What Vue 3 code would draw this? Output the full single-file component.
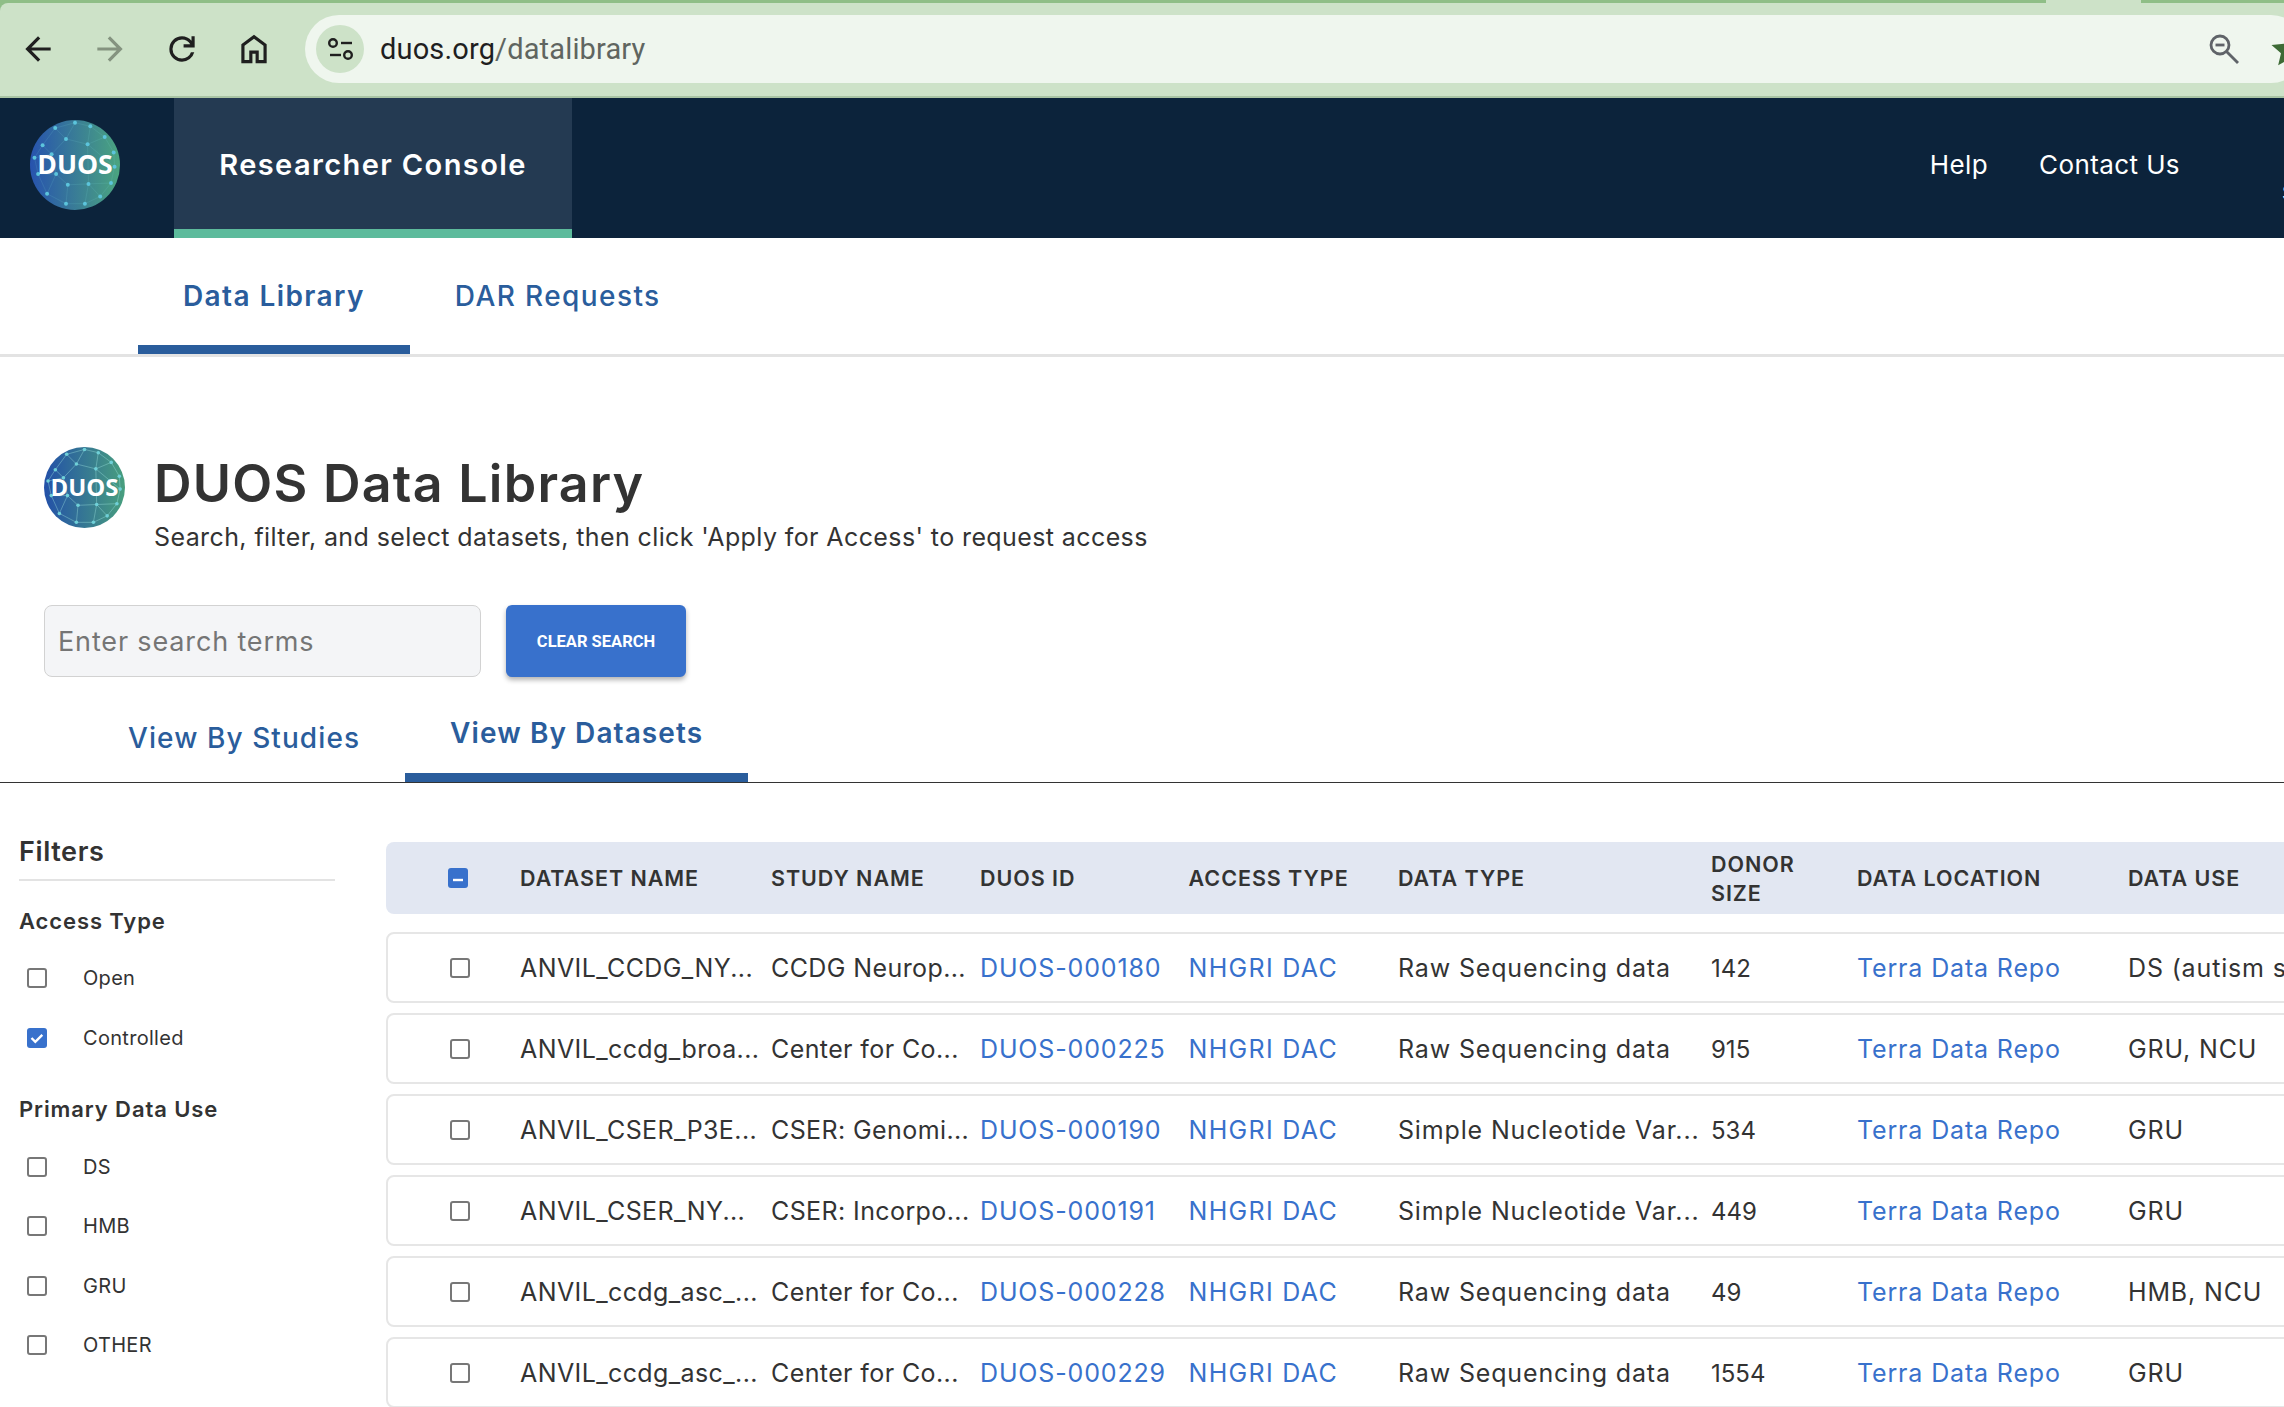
<template>
  <div class="page">
    <!-- browser chrome -->
    <div class="chrome">
      <span class="notch"></span>
      <div class="bar">
        <div class="toolbar">
          <svg class="tool" viewBox="0 0 24 24"><path d="m7.825 13 5.6 5.6L12 20l-8-8 8-8 1.425 1.4-5.6 5.6H20v2z" /></svg>
          <svg class="tool dim" viewBox="0 0 24 24"><path d="M16.175 13H4v-2h12.175l-5.6-5.6L12 4l8 8-8 8-1.425-1.4z" /></svg>
          <svg class="tool" viewBox="0 0 24 24"><path d="M12 20q-3.35 0-5.675-2.325T4 12t2.325-5.675T12 4q1.725 0 3.3.713T18 6.75V4h2v7h-7V9h4.2q-.8-1.4-2.187-2.2T12 6Q9.5 6 7.75 7.75T6 12t1.75 4.25T12 18q1.925 0 3.475-1.1T17.65 14h2.1q-.7 2.65-2.85 4.325T12 20" /></svg>
          <svg class="tool" viewBox="0 0 24 24"><path d="M6 19h3v-6h6v6h3v-9l-6-4.5L6 10zm-2 2V9l8-6 8 6v12h-7v-6h-2v6z" /></svg>
          <div class="omnibox">
            <span class="site-info">
              <svg width="48" height="48" viewBox="0 0 48 48" fill="none" stroke="#1f1f1f" stroke-width="2.4">
                <circle cx="17" cy="18" r="3.8" />
                <path d="M25 18h11" />
                <path d="M14 30h11" />
                <circle cx="32" cy="30" r="3.8" />
              </svg>
            </span>
            <span class="url">duos.org<span class="url-path">/datalibrary</span></span>
            <svg class="zoom-out" width="32" height="32" viewBox="0 0 32 32" fill="none" stroke="#5f6368" stroke-width="2.8">
              <circle cx="12" cy="12" r="9" />
              <path d="M7.5 12h9" />
              <path d="M18.500 18.500 30 30" />
            </svg>
            <svg class="star" width="40" height="40" viewBox="0 0 24 24"><path fill="#3d6a35" d="m12 2 3 6.9 7.5.7-5.7 4.9 1.7 7.3L12 18l-6.500 3.800 1.700-7.300L1.500 9.600 9 8.900z" /></svg>
          </div>
        </div>
      </div>
    </div>

    <!-- app nav -->
    <header class="nav">
      <svg class="nav-logo" viewBox="0 0 100 100">
        <defs>
          <linearGradient id="navGrad" x1="0" y1="0" x2="1" y2="0">
            <stop offset="0" stop-color="#2753ae" />
            <stop offset="1" stop-color="#4ba57f" />
          </linearGradient>
        </defs>
        <circle cx="50" cy="50" r="50" fill="url(#navGrad)" />
        <line v-for="(l, i) in logoLines" :key="i" :x1="logoNodes[l[0]][0]" :y1="logoNodes[l[0]][1]" :x2="logoNodes[l[1]][0]" :y2="logoNodes[l[1]][1]" stroke="#7fd8d8" stroke-opacity="0.22" stroke-width="0.7" />
        <circle v-for="(n, i) in logoNodes" :key="i" :cx="n[0]" :cy="n[1]" r="2.200" fill="#5cc4dc" />
        <text x="50" y="60.500" text-anchor="middle" class="logo-text">DUOS</text>
      </svg>
      <div class="console-tab">Researcher Console</div>
      <nav class="nav-links">
        <a>Help</a>
        <a>Contact Us</a>
      </nav>
      <span class="nav-clip">S</span>
    </header>

    <div class="subtabs">
      <a class="subtab is-active">Data Library</a>
      <a class="subtab">DAR Requests</a>
    </div>

    <section class="lib-head">
      <svg class="lib-logo" viewBox="0 0 100 100">
        <defs>
          <linearGradient id="libGrad" x1="0" y1="0" x2="1" y2="0">
            <stop offset="0" stop-color="#2350a8" />
            <stop offset="1" stop-color="#489f7e" />
          </linearGradient>
        </defs>
        <circle cx="50" cy="50" r="50" fill="url(#libGrad)" />
        <line v-for="(l, i) in logoLines" :key="i" :x1="logoNodes[l[0]][0]" :y1="logoNodes[l[0]][1]" :x2="logoNodes[l[1]][0]" :y2="logoNodes[l[1]][1]" stroke="#9fe6e0" stroke-opacity="0.6" stroke-width="0.8" />
        <circle v-for="(n, i) in logoNodes" :key="i" :cx="n[0]" :cy="n[1]" r="2.200" fill="#6fd0d8" />
        <text x="50" y="61" text-anchor="middle" class="logo-text">DUOS</text>
      </svg>
      <div>
        <h1>DUOS Data Library</h1>
        <p>Search, filter, and select datasets, then click 'Apply for Access' to request access</p>
      </div>
    </section>

    <div class="search-row">
      <input class="search" placeholder="Enter search terms" />
      <button class="clear-btn">CLEAR SEARCH</button>
    </div>

    <div class="view-tabs">
      <a class="view-tab">View By Studies</a>
      <a class="view-tab is-active">View By Datasets</a>
    </div>

    <div class="body">
      <aside class="filters">
        <div class="filters-title">Filters</div>
        <div v-for="g in filterGroups" :key="g.title" class="filter-group">
          <div class="group-title">{{ g.title }}</div>
          <label v-for="o in g.options" :key="o.label" class="filter-opt">
            <span class="check" :class="{ 'is-on': o.on }">
              <svg v-if="o.on" width="20" height="20" viewBox="0 0 20 20" fill="none" stroke="#fff" stroke-width="2.400"><path d="m4.500 10 3.800 3.800 7-7" /></svg>
            </span>
            {{ o.label }}
          </label>
        </div>
      </aside>

      <div class="table">
        <div class="thead">
          <span class="cell-check"><span class="check is-on">
            <svg width="20" height="20" viewBox="0 0 20 20" fill="none" stroke="#fff" stroke-width="2.400"><path d="M5 10h10" /></svg>
          </span></span>
          <span v-for="h in headers" :key="h">{{ h }}</span>
        </div>
        <div v-for="r in rows" :key="r.id" class="trow">
          <span class="cell-check"><span class="check"></span></span>
          <span class="tight">{{ r.name }}</span>
          <span class="tight">{{ r.study }}</span>
          <a>{{ r.id }}</a>
          <a class="wide">NHGRI DAC</a>
          <span>{{ r.type }}</span>
          <span class="donors">{{ r.donors }}</span>
          <a>Terra Data Repo</a>
          <span>{{ r.use }}</span>
        </div>
      </div>
    </div>
  </div>
</template>

<script setup>
const logoNodes = [
  [50, 3], [28, 9], [67, 7], [83, 19], [40, 21], [64, 27], [93, 36], [14, 28], [24, 38], [5, 42],
  [94, 52], [29, 60], [9, 60], [42, 72], [65, 71], [90, 70], [19, 82], [40, 93], [61, 93], [78, 85]
];

const logoLines = [
  [0, 1], [0, 2], [2, 3], [1, 4], [0, 4], [4, 5], [2, 5], [5, 3], [3, 6], [1, 7], [7, 8], [4, 8], [8, 9], [7, 9],
  [6, 10], [5, 10], [8, 11], [9, 12], [11, 12], [11, 13], [13, 14], [14, 15], [10, 15], [12, 16], [11, 16],
  [16, 17], [13, 17], [17, 18], [14, 18], [18, 19], [14, 19], [15, 19], [5, 14]
];

const filterGroups = [
  {
    title: 'Access Type',
    options: [
      { label: 'Open', on: false },
      { label: 'Controlled', on: true }
    ]
  },
  {
    title: 'Primary Data Use',
    options: [
      { label: 'DS', on: false },
      { label: 'HMB', on: false },
      { label: 'GRU', on: false },
      { label: 'OTHER', on: false }
    ]
  }
];

const headers = ['DATASET NAME', 'STUDY NAME', 'DUOS ID', 'ACCESS TYPE', 'DATA TYPE', 'DONOR SIZE', 'DATA LOCATION', 'DATA USE'];

const rows = [
  { name: 'ANVIL_CCDG_NY...', study: 'CCDG Neurop...', id: 'DUOS-000180', type: 'Raw Sequencing data', donors: 142, use: 'DS (autism spectrum disorder)' },
  { name: 'ANVIL_ccdg_broa...', study: 'Center for Co...', id: 'DUOS-000225', type: 'Raw Sequencing data', donors: 915, use: 'GRU, NCU' },
  { name: 'ANVIL_CSER_P3E...', study: 'CSER: Genomi...', id: 'DUOS-000190', type: 'Simple Nucleotide Var...', donors: 534, use: 'GRU' },
  { name: 'ANVIL_CSER_NY...', study: 'CSER: Incorpo...', id: 'DUOS-000191', type: 'Simple Nucleotide Var...', donors: 449, use: 'GRU' },
  { name: 'ANVIL_ccdg_asc_...', study: 'Center for Co...', id: 'DUOS-000228', type: 'Raw Sequencing data', donors: 49, use: 'HMB, NCU' },
  { name: 'ANVIL_ccdg_asc_...', study: 'Center for Co...', id: 'DUOS-000229', type: 'Raw Sequencing data', donors: 1554, use: 'GRU' }
];
</script>

<style scoped>
.page {
  width: 100%;
  height: 100vh;
  overflow: hidden;
  background: #fff;
  color: #333;
  font-family: Inter, "Noto Sans", sans-serif;
}

/* browser chrome */
.chrome {
  position: relative;
  height: 98px;
  padding-top: 3px;
  box-sizing: border-box;
  background: #8fbe87;
  border-bottom: 2px solid #a9c4a4;
}

.notch {
  position: absolute;
  top: 0;
  left: 2046px;
  width: 95px;
  height: 3px;
  background: #cde2c8;
}

.bar {
  height: 100%;
  background: #cde2c8;
  border-top-left-radius: 8px;
}

.toolbar {
  display: flex;
  align-items: center;
  height: 68px;
  padding: 12px 0 0 19px;
  box-sizing: content-box;
}

.tool {
  width: 38px;
  height: 38px;
  margin-right: 34px;
  flex: none;
  fill: #1f1f1f;
}

.tool.dim {
  fill: #84937f;
}

.tool:nth-child(4) {
  margin-right: 32px;
}

.omnibox {
  display: flex;
  align-items: center;
  flex: none;
  width: 2000px;
  height: 68px;
  padding-left: 11px;
  box-sizing: border-box;
  background: #eff6ee;
  border-radius: 34px;
}

.site-info {
  width: 48px;
  height: 48px;
  border-radius: 50%;
  background: #cde2c8;
  flex: none;
}

.url {
  margin-left: 16px;
  font-family: Roboto, sans-serif;
  font-size: 29px;
  letter-spacing: 0.15px;
  color: #1f1f1f;
}

.url-path {
  color: #5f6560;
}

.zoom-out {
  margin-left: auto;
  margin-right: 29px;
}

.star {
  margin-right: -4px;
}

/* nav */
.nav {
  display: flex;
  align-items: center;
  height: 140px;
  padding-bottom: 6px;
  box-sizing: border-box;
  background: #0c233b;
  color: #fff;
}

.nav-logo {
  width: 90px;
  height: 90px;
  margin-left: 30px;
  flex: none;
}

.logo-text {
  font-family: "Open Sans", sans-serif;
  font-size: 29.500px;
  font-weight: 700;
  fill: #fff;
}

.console-tab {
  align-self: stretch;
  width: 398px;
  margin: 0 0 -6px 54px;
  padding-top: 1px;
  box-sizing: border-box;
  border-bottom: 9px solid #5dbb9c;
  background: #243a52;
  display: flex;
  align-items: center;
  justify-content: center;
  font-size: 29px;
  font-weight: 600;
  letter-spacing: 1.4px;
}

.nav-links {
  margin-left: auto;
  margin-bottom: 2px;
  display: flex;
  gap: 51px;
  font-size: 26px;
  letter-spacing: 0.4px;
}

.nav-clip {
  margin-left: 102px;
  margin-top: 56px;
  font-size: 20px;
  flex: none;
  width: 2px;
  overflow: hidden;
}

/* top tabs */
.subtabs {
  display: flex;
  height: 119px;
  padding-left: 138px;
  box-sizing: border-box;
  border-bottom: 3px solid #e3e3e3;
}

.subtab {
  display: flex;
  align-items: center;
  padding: 8px 45px 0;
  font-size: 28px;
  font-weight: 500;
  letter-spacing: 1.4px;
  color: #2a5d9c;
  border-bottom: 9px solid transparent;
}

.subtab.is-active {
  font-weight: 600;
  border-bottom-color: #2a5d9c;
}

/* page head */
.lib-head {
  display: flex;
  gap: 29px;
  margin-top: 90px;
  padding-left: 44px;
}

.lib-logo {
  width: 81px;
  height: 81px;
  flex: none;
}

h1 {
  margin: 7px 0 0;
  font-size: 52px;
  line-height: 60px;
  font-weight: 600;
  letter-spacing: 1.25px;
}

.lib-head p {
  margin: 5px 0 0;
  font-size: 25px;
  line-height: 36px;
  letter-spacing: 0.4px;
}

/* search */
.search-row {
  display: flex;
  gap: 25px;
  margin-top: 50px;
  padding-left: 44px;
}

.search {
  width: 437px;
  height: 72px;
  box-sizing: border-box;
  padding: 0 13px;
  border: 1.500px solid #d2d2d2;
  border-radius: 8px;
  background: #f4f5f7;
  font-family: inherit;
  font-size: 27px;
  letter-spacing: 0.85px;
}

.search::placeholder {
  color: #757575;
  opacity: 1;
}

.clear-btn {
  width: 180px;
  height: 72px;
  border: 0;
  border-radius: 6px;
  background: #3871cc;
  color: #fff;
  font-family: Roboto, sans-serif;
  font-size: 16.500px;
  font-weight: 700;
  box-shadow: 0 3px 5px rgba(0, 0, 0, 0.3);
}

/* view tabs */
.view-tabs {
  display: flex;
  align-items: flex-end;
  height: 106px;
  padding-left: 83px;
  box-sizing: border-box;
  border-bottom: 1.500px solid #333;
}

.view-tab {
  padding: 0 45px 22px;
  font-size: 28px;
  font-weight: 500;
  letter-spacing: 1.08px;
  line-height: 44px;
  color: #2a5d9c;
}

.view-tab.is-active {
  padding-bottom: 18px;
  font-weight: 600;
  border-bottom: 9px solid #2a5d9c;
}

/* filters + table */
.body {
  display: flex;
}

.filters {
  width: 316px;
  margin-left: 19px;
  padding-top: 50.500px;
  flex: none;
}

.filters-title {
  padding-bottom: 9px;
  border-bottom: 2px solid #e3e3e3;
  font-size: 27px;
  line-height: 36px;
  font-weight: 600;
  letter-spacing: 0.6px;
}

.filter-group {
  margin-top: 24px;
}

.filter-group + .filter-group {
  margin-top: 26px;
}

.group-title {
  font-size: 22px;
  line-height: 32px;
  font-weight: 600;
  letter-spacing: 0.9px;
  margin-bottom: 12px;
}

.filter-opt {
  display: flex;
  align-items: center;
  gap: 36.500px;
  height: 59.400px;
  padding-left: 7.500px;
  font-size: 20px;
  letter-spacing: 0.3px;
}

.check {
  display: block;
  width: 20px;
  height: 20px;
  box-sizing: border-box;
  flex: none;
  border: 2px solid #777;
  border-radius: 3px;
}

.check.is-on {
  border: 0;
  background: #3871cc;
}

.table {
  margin-left: 51px;
  padding-top: 58.500px;
  flex: none;
}

.thead,
.trow {
  display: grid;
  grid-template-columns: 134px 251px 209px 208.600px 209.400px 313px 146px 271px 400px;
  align-items: center;
  box-sizing: border-box;
  width: 2200px;
}

.thead {
  height: 72px;
  padding-top: 2px;
  margin-bottom: 18px;
  border-radius: 8px;
  background: #e2e7f2;
  font-size: 21.500px;
  line-height: 29px;
  font-weight: 600;
  letter-spacing: 0.95px;
}

.thead .cell-check {
  margin-top: -2px;
}

.thead span:nth-child(7) {
  width: 90px;
}

.trow {
  grid-template-columns: 132px 251px 209px 208.600px 209.400px 313px 146px 271px 400px;
  height: 71px;
  padding-top: 2px;
  margin-bottom: 10px;
  border: 2px solid #e6e6e6;
  border-radius: 8px;
  font-size: 25px;
  letter-spacing: 0.85px;
  white-space: nowrap;
}

.trow a {
  color: #3871cc;
}

.trow .wide {
  letter-spacing: 1.3px;
}

.trow .tight {
  letter-spacing: 0.4px;
}

.trow .donors {
  font-size: 24px;
  letter-spacing: 0;
}

.cell-check {
  padding-left: 62px;
}
</style>

<style>
html,
body {
  margin: 0;
  background: #fff;
}
</style>
